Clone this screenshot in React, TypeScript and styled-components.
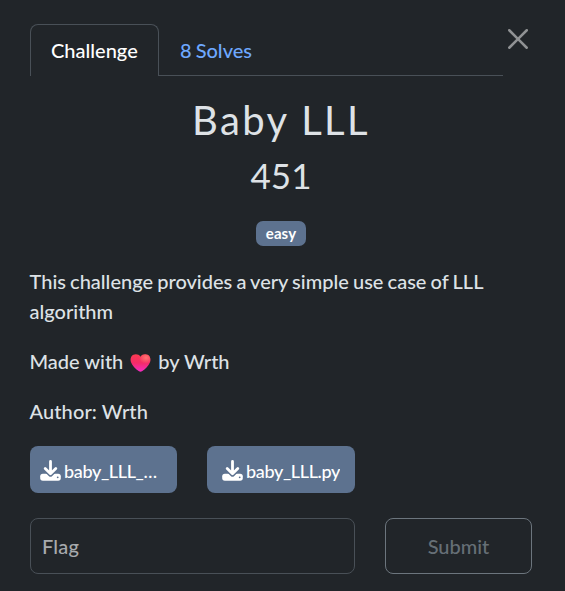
import React, { useState } from 'react';
import styled, { createGlobalStyle } from 'styled-components';

const GlobalStyle = createGlobalStyle`
  *, *::before, *::after { box-sizing: border-box; }
  body {
    margin: 0;
    background: #212529;
    color: #dee2e6;
    font: 500 20px/30px Lato, 'Liberation Sans', sans-serif;
  }
  h2, h3, p { margin: 0; }
  button, input { font: inherit; }
`;

const Modal = styled.main`
  min-height: 591px;
  padding: 24px 33px 17px 30px;
  background: #212529;
`;

const Header = styled.header`
  display: flex;
  align-items: flex-start;
  justify-content: space-between;
`;

const Tabs = styled.nav`
  display: flex;
  width: 473px;
  height: 52px;
  border-bottom: 1px solid #495057;
`;

const Tab = styled.button<{ $active?: boolean }>`
  height: 52px;
  padding: 0 21px 2px 20px;
  border: 1px solid ${({ $active }) => ($active ? '#495057' : 'transparent')};
  border-bottom: 0;
  border-radius: 8px 8px 0 0;
  background: ${({ $active }) => ($active ? '#212529' : 'transparent')};
  color: ${({ $active }) => ($active ? '#fff' : '#6ea8fe')};
  word-spacing: -1px;
  &:first-child { width: 129px; }
`;

const CloseButton = styled.button`
  display: flex;
  margin: 5px 4px 0 0;
  padding: 0;
  border: 0;
  background: none;
  color: #909294;
`;

const Title = styled.h2`
  margin-top: 20px;
  font-size: 40px;
  font-weight: 400;
  line-height: 48px;
  letter-spacing: 2.4px;
  text-align: center;
`;

const Points = styled.h3`
  margin-top: 10px;
  font-size: 35px;
  font-weight: 400;
  line-height: 42px;
  text-align: center;
`;

const Tags = styled.div`
  display: flex;
  justify-content: center;
  margin-top: 25px;
`;

const Tag = styled.span`
  width: 50px;
  height: 25px;
  border-radius: 7px;
  background: #5d728f;
  color: #fff;
  font-size: 15px;
  font-weight: 700;
  line-height: 25px;
  letter-spacing: 0.1px;
  text-align: center;
`;

const Description = styled.section`
  display: grid;
  gap: 20px;
  margin: 20px 0 0 -0.5px;
`;

const Paragraph = styled.p<{ $tracking?: number; $wordSpacing?: number }>`
  letter-spacing: ${({ $tracking = 0 }) => $tracking}px;
  word-spacing: ${({ $wordSpacing = 0 }) => $wordSpacing}px;
`;

const Heart = styled.svg`
  width: 21px;
  height: 18px;
  margin: 0 7px;
  vertical-align: -3px;
`;

const Grid = styled.div<{ $columns: string; $top: number }>`
  display: grid;
  grid-template-columns: ${({ $columns }) => $columns};
  gap: 30px;
  margin-top: ${({ $top }) => $top}px;
`;

const FileButton = styled.button`
  display: flex;
  align-items: center;
  justify-content: center;
  gap: 3px;
  height: 47px;
  padding: 3px 10px 0;
  border: 0;
  border-radius: 8px;
  background: #5d728f;
  color: #fff;
  font-size: 18px;
  letter-spacing: -0.35px;
  svg { flex: none; margin-top: -1px; }
`;

const FileName = styled.span`
  overflow: hidden;
  text-overflow: ellipsis;
  white-space: nowrap;
`;

const FlagInput = styled.input`
  min-width: 0;
  height: 56px;
  padding: 0 12px 0 11px;
  border: 1px solid #495057;
  border-radius: 8px;
  outline: 0;
  background: #212529;
  color: #dee2e6;
  &::placeholder { color: #a7aaad; opacity: 1; letter-spacing: 0.2px; }
`;

const SubmitButton = styled.button`
  height: 56px;
  padding: 0;
  border: 1px solid #6c757d;
  border-radius: 8px;
  background: transparent;
  color: #666f76;
`;

const DownloadIcon = () => (
  <svg width="21" height="21" viewBox="0 0 21 21" fill="none" aria-hidden="true">
    <rect x="0.2" y="13.700" width="20.600" height="7" rx="2.600" fill="#fff" />
    <circle cx="17.700" cy="17.300" r="0.900" fill="#5d728f" />
    <path d="M5 8.800l5.500 5.300L16 8.800" stroke="#5d728f" strokeWidth="5" strokeLinejoin="round" />
    <path d="M10.500 1.500v12M5.200 8.500l5.300 5.200 5.300-5.200" stroke="#fff" strokeWidth="2.800" strokeLinecap="round" strokeLinejoin="round" />
  </svg>
);

export default function App() {
  const [flag, setFlag] = useState('');
  return (
    <>
      <GlobalStyle />
      <Modal>
        <Header>
          <Tabs>
            <Tab $active>Challenge</Tab>
            <Tab>8 Solves</Tab>
          </Tabs>
          <CloseButton aria-label="Close">
            <svg width="20" height="20" viewBox="0 0 16 16" fill="currentColor">
              <path d="M.293.293a1 1 0 0 1 1.414 0L8 6.586 14.293.293a1 1 0 1 1 1.414 1.414L9.414 8l6.293 6.293a1 1 0 0 1-1.414 1.414L8 9.414l-6.293 6.293a1 1 0 0 1-1.414-1.414L6.586 8 .293 1.707a1 1 0 0 1 0-1.414z" />
            </svg>
          </CloseButton>
        </Header>
        <Title>Baby LLL</Title>
        <Points>451</Points>
        <Tags><Tag>easy</Tag></Tags>
        <Description>
          <Paragraph $wordSpacing={-0.9}>This challenge provides a very simple use case of LLL algorithm</Paragraph>
          <Paragraph $wordSpacing={-0.1}>
            Made with
            <Heart viewBox="0 0 21 18" role="img" aria-label="heart">
              <defs>
                <linearGradient id="heartFill" x1="0" y1="0" x2="0" y2="1">
                  <stop offset="0" stopColor="#fb3b50" />
                  <stop offset=".5" stopColor="#f52c68" />
                  <stop offset="1" stopColor="#f52bc4" />
                </linearGradient>
                <radialGradient id="heartShine" cx=".78" cy=".2" r=".35">
                  <stop offset="0" stopColor="#ff7373" />
                  <stop offset="1" stopColor="#ff7373" stopOpacity="0" />
                </radialGradient>
              </defs>
              {['heartFill', 'heartShine'].map((id) => (
                <path key={id} fill={`url(#${id})`} d="M10.5 2.7C8.900.200 5.700-.300 3.400.800.700 2.100 0 5.300 1 8.200c1.200 3.500 4.700 6.800 8 9 .900.600 2.100.600 3 0 3.300-2.200 6.800-5.500 8-9 1-2.900.300-6.100-2.400-7.400-2.300-1.100-5.500-.600-7.100 1.900z" />
              ))}
            </Heart>
            by Wrth
          </Paragraph>
          <Paragraph $tracking={0.1}>Author: Wrth</Paragraph>
        </Description>
        <Grid $columns="147px 148px" $top={20}>
          <FileButton><DownloadIcon /><FileName>baby_LLL_output.txt</FileName></FileButton>
          <FileButton><DownloadIcon /><FileName>baby_LLL.py</FileName></FileButton>
        </Grid>
        <Grid $columns="325px 147px" $top={25}>
          <FlagInput placeholder="Flag" value={flag} onChange={(e) => setFlag(e.target.value)} />
          <SubmitButton>Submit</SubmitButton>
        </Grid>
      </Modal>
    </>
  );
}
